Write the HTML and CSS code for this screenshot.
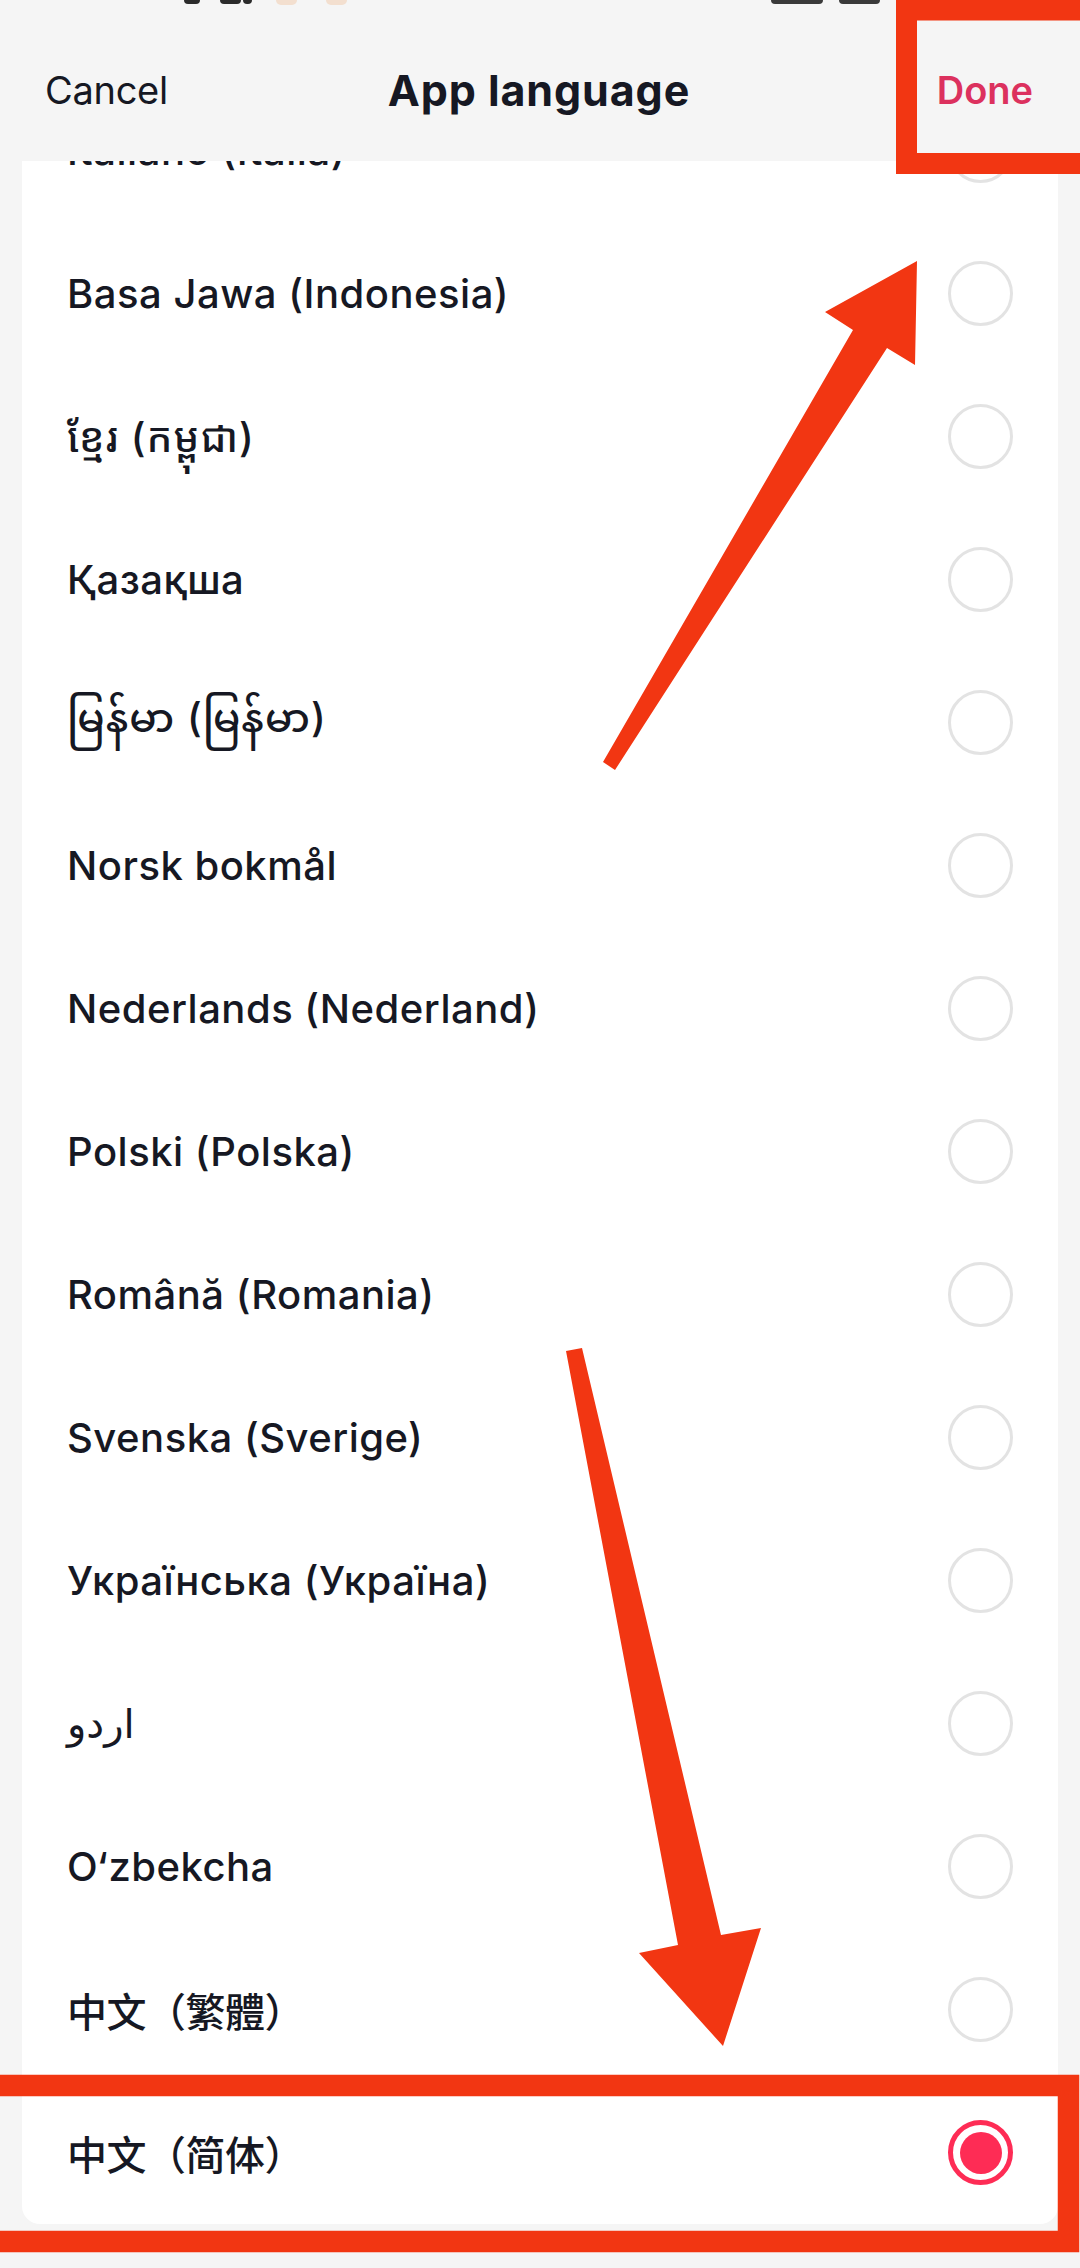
FILE: index.html
```
<!DOCTYPE html>
<html lang="en">
<head>
<meta charset="utf-8">
<title>App language</title>
<link rel="stylesheet" href="styles.css">
</head>
<body>
<div class="screen">
  <header class="topbar">
    <div class="status">
      <span class="sb sb-a"></span>
      <span class="sb sb-b"></span>
      <span class="sb sb-c"></span>
      <span class="sb sb-d"></span>
      <span class="sb sb-e"></span>
      <span class="sb sb-f"></span>
      <span class="sb sb-g"></span>
    </div>
    <nav class="nav">
      <span class="cancel">Cancel</span>
      <h1 class="title">App language</h1>
      <span class="done">Done</span>
    </nav>
  </header>
  <main class="viewport">
    <ul class="card">
      <li class="row"><span class="label">Italiano (Italia)</span><span class="radio"></span></li>
      <li class="row"><span class="label">Basa Jawa (Indonesia)</span><span class="radio"></span></li>
      <li class="row"><span class="label khmer">ខ្មែរ (កម្ពុជា)</span><span class="radio"></span></li>
      <li class="row"><span class="label">Қазақша</span><span class="radio"></span></li>
      <li class="row"><span class="label myanmar">မြန်မာ (မြန်မာ)</span><span class="radio"></span></li>
      <li class="row"><span class="label">Norsk bokmål</span><span class="radio"></span></li>
      <li class="row"><span class="label">Nederlands (Nederland)</span><span class="radio"></span></li>
      <li class="row"><span class="label">Polski (Polska)</span><span class="radio"></span></li>
      <li class="row"><span class="label">Română (Romania)</span><span class="radio"></span></li>
      <li class="row"><span class="label">Svenska (Sverige)</span><span class="radio"></span></li>
      <li class="row"><span class="label">Українська (Україна)</span><span class="radio"></span></li>
      <li class="row"><span class="label arabic">اردو</span><span class="radio"></span></li>
      <li class="row"><span class="label">O‘zbekcha</span><span class="radio"></span></li>
      <li class="row"><span class="label cjk-tc" lang="zh-Hant">中文（繁體）</span><span class="radio"></span></li>
      <li class="row"><span class="label cjk-sc" lang="zh-Hans">中文（简体）</span><span class="radio radio-on"><span class="dot"></span></span></li>
    </ul>
  </main>
  <svg class="marks" width="1080" height="2268" viewBox="0 0 1080 2268" xmlns="http://www.w3.org/2000/svg">
    <rect x="906.5" y="10" width="220" height="153.5" fill="none" stroke="#f23612" stroke-width="21"/>
    <polygon points="917,261 915,365 887,348 615,770 603,762 853,330 825,312" fill="#f23612"/>
    <polygon points="723,2046 639,1953 678,1945 566,1351 582,1348 721,1935 761,1928" fill="#f23612"/>
    <rect x="-40" y="2085.5" width="1108.5" height="156" fill="none" stroke="#f23612" stroke-width="21.5"/>
  </svg>
</div>
</body>
</html>
```
FILE: styles.css
```
* {
  box-sizing: border-box;
}

html, body {
  margin: 0;
  padding: 0;
}

body {
  background: #f5f5f5;
  font-family: Inter, "Noto Sans", "Noto Sans Khmer", "Noto Sans Myanmar", "DejaVu Sans", "Noto Sans CJK SC", sans-serif;
  color: #161823;
}

.screen {
  position: relative;
  width: 1080px;
  height: 2268px;
  overflow: hidden;
  background: #f5f5f5;
}

.topbar {
  position: relative;
  z-index: 2;
  height: 161px;
  background: #f5f5f5;
}

.status {
  display: flex;
  height: 6px;
  overflow: hidden;
}

.sb {
  display: block;
  height: 4px;
  border-radius: 0 0 4px 4px;
  background: #2b2b2b;
}

.sb-a { margin-left: 184px; width: 16px; border-radius: 0 0 8px 8px; }
.sb-b { margin-left: 20px; width: 21px; border-radius: 0 0 8px 8px; }
.sb-c { margin-left: 2px; width: 9px; }
.sb-d { margin-left: 24px; width: 21px; height: 5px; background: #f3dfcf; border-radius: 0 0 8px 8px; }
.sb-e { margin-left: 29px; width: 21px; height: 5px; background: #f3dfcf; border-radius: 0 0 8px 8px; }
.sb-f { margin-left: 424px; width: 52px; background: #3a3a3a; border-radius: 0 0 6px 6px; }
.sb-g { margin-left: 16px; width: 41px; background: #3a3a3a; border-radius: 0 0 6px 6px; }

.nav {
  display: grid;
  grid-template-columns: 1fr auto 1fr;
  align-items: center;
  height: 155px;
  padding: 13px 47px 0 45px;
}

.cancel {
  justify-self: start;
  font-size: 38px;
  font-weight: 400;
  color: #161823;
  letter-spacing: -0.3px;
}

.title {
  margin: 0;
  font-size: 43px;
  font-weight: 700;
  color: #161823;
  letter-spacing: 0.9px;
}

.done {
  justify-self: end;
  font-size: 38px;
  font-weight: 600;
  color: #dc315e;
}

.viewport {
  height: 2107px;
  overflow: hidden;
}

.card {
  list-style: none;
  margin: -82px 22px 0;
  padding: 0;
  background: #ffffff;
  border-radius: 18px;
}

.row {
  display: flex;
  align-items: center;
  justify-content: space-between;
  height: 143px;
  padding: 0 45px;
}

.label {
  font-size: 40px;
  font-weight: 500;
  color: #161823;
  white-space: nowrap;
  letter-spacing: 0.5px;
}

.arabic {
  font-family: "DejaVu Sans", "Noto Sans", sans-serif;
  font-weight: 400;
  letter-spacing: 0;
}

.khmer,
.myanmar {
  letter-spacing: 1px;
}

.cjk-tc {
  font-family: "Noto Sans CJK TC", "Noto Sans CJK SC", sans-serif;
  letter-spacing: -0.5px;
}

.cjk-sc {
  font-family: "Noto Sans CJK SC", sans-serif;
  letter-spacing: -0.5px;
}

.radio {
  display: flex;
  align-items: center;
  justify-content: center;
  flex: 0 0 65px;
  width: 65px;
  height: 65px;
  border: 3px solid #e3e3e3;
  border-radius: 50%;
}

.radio-on {
  border: 5px solid #fe2c55;
}

.dot {
  display: block;
  width: 42px;
  height: 42px;
  border-radius: 50%;
  background: #fe2c55;
}

.marks {
  position: absolute;
  left: 0;
  top: 0;
  z-index: 3;
  pointer-events: none;
}
```
